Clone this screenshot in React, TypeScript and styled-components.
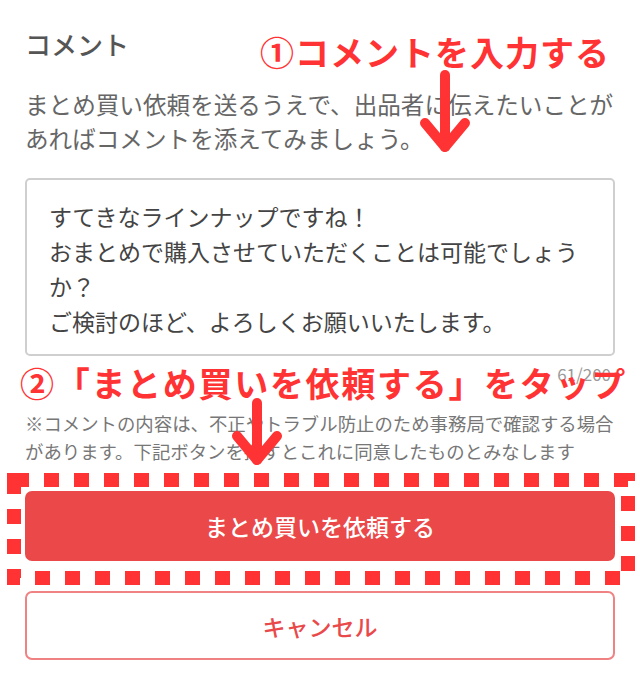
import React from "react";
import styled, { createGlobalStyle } from "styled-components";

const Global = createGlobalStyle`
  html, body { margin: 0; padding: 0; background: #ffffff; }
  body { font-family: "Noto Sans CJK JP", "Noto Sans", sans-serif; }
  * { box-sizing: border-box; }
`;

const Page = styled.div`
  position: relative;
  width: 640px;
  height: 680px;
  overflow: hidden;
  padding: 24px 25px 0;
  display: flex;
  flex-direction: column;
`;

const Heading = styled.h2`
  margin: 0;
  font-size: 26px;
  line-height: 39px;
  font-weight: 500;
  color: #555555;
`;

const Description = styled.p`
  margin: 24px 0 0;
  font-size: 23.6px;
  line-height: 34px;
  color: #666666;
  white-space: nowrap;
`;

const CommentBox = styled.div`
  margin-top: 23px;
  border: 2px solid #cfcfcf;
  border-radius: 5px;
  padding: 19px 22px 15px;
  font-size: 23px;
  line-height: 35px;
  color: #444444;
  white-space: pre-wrap;
`;

const Counter = styled.div`
  margin-top: 8px;
  padding-right: 4px;
  text-align: right;
  font-size: 17px;
  line-height: 20px;
  color: #9a9a9a;
`;

const Note = styled.p`
  margin: 25px 0 0;
  font-size: 18.4px;
  line-height: 28px;
  color: #777777;
  white-space: nowrap;
`;

const Button = styled.button<{ $variant: "primary" | "outline" }>`
  display: flex;
  align-items: center;
  justify-content: center;
  width: 100%;
  height: ${(p) => (p.$variant === "primary" ? "70px" : "69px")};
  margin-top: ${(p) => (p.$variant === "primary" ? "26px" : "30px")};
  border-radius: 7px;
  font-family: "Noto Sans CJK JP", "Noto Sans", sans-serif;
  font-size: 23px;
  font-weight: 500;
  cursor: pointer;
  background: ${(p) => (p.$variant === "primary" ? "#ea4849" : "#ffffff")};
  color: ${(p) => (p.$variant === "primary" ? "#ffffff" : "#e9494a")};
  border: 2px solid ${(p) => (p.$variant === "primary" ? "#ea4849" : "#f08283")};
`;

const Callout = styled.div<{ $left: number; $top: number; $spacing: number }>`
  position: absolute;
  left: ${(p) => p.$left}px;
  top: ${(p) => p.$top}px;
  font-size: 34px;
  line-height: 40px;
  font-weight: 700;
  letter-spacing: ${(p) => p.$spacing}px;
  color: #ff3334;
  white-space: nowrap;
`;

const Overlay = styled.svg<{ $left: number; $top: number }>`
  position: absolute;
  left: ${(p) => p.$left}px;
  top: ${(p) => p.$top}px;
  overflow: visible;
`;

const Arrow = ({ left, top, len }: { left: number; top: number; len: number }) => (
  <Overlay $left={left} $top={top} width={56} height={len + 15}>
    <g stroke="#ff3334" strokeWidth={10} strokeLinecap="round" strokeLinejoin="round" fill="none">
      <line x1={28} y1={5} x2={28} y2={len} />
      <polyline points={`8,${len - 24} 28,${len} 48,${len - 24}`} />
    </g>
  </Overlay>
);

export default function App() {
  return (
    <>
      <Global />
      <Page>
        <Heading>コメント</Heading>
        <Description>
          まとめ買い依頼を送るうえで、出品者に伝えたいことが
          <br />
          あればコメントを添えてみましょう。
        </Description>
        <CommentBox>
          {"すてきなラインナップですね！\nおまとめで購入させていただくことは可能でしょうか？\nご検討のほど、よろしくお願いいたします。"}
        </CommentBox>
        <Counter>61/200</Counter>
        <Note>
          ※コメントの内容は、不正やトラブル防止のため事務局で確認する場合
          <br />
          があります。下記ボタンを押すとこれに同意したものとみなします
        </Note>
        <Button $variant="primary">まとめ買いを依頼する</Button>
        <Button $variant="outline">キャンセル</Button>

        <Callout $left={260} $top={32} $spacing={1}>①コメントを入力する</Callout>
        <Arrow left={417} top={70} len={77} />
        <Callout $left={20} $top={363} $spacing={1.7}>②「まとめ買いを依頼する」をタップ</Callout>
        <Arrow left={229} top={398} len={62} />
        <Overlay $left={0} $top={466} width={640} height={126}>
          <rect
            x={14}
            y={14}
            width={614}
            height={98}
            fill="none"
            stroke="#ff3334"
            strokeWidth={14}
            strokeDasharray="15 15"
          />
        </Overlay>
      </Page>
    </>
  );
}
